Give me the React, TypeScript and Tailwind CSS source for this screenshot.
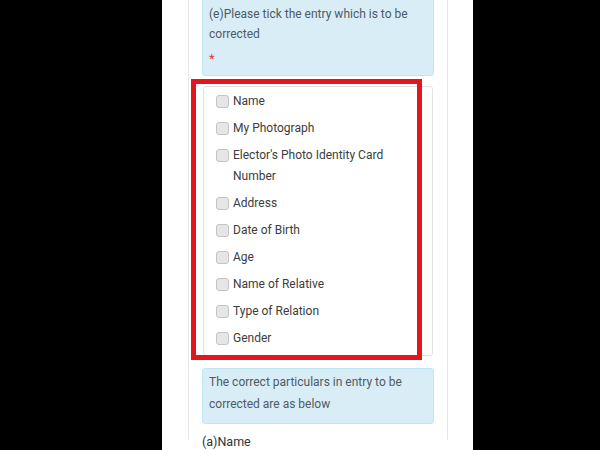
const entries = [
  "Name",
  "My Photograph",
  "Elector's Photo Identity Card Number",
  "Address",
  "Date of Birth",
  "Age",
  "Name of Relative",
  "Type of Relation",
  "Gender",
];

const Checkbox = () => (
  <span className="mt-[4px] h-[13px] w-[13px] shrink-0 rounded-[3px] border border-[#c4c4c4] bg-[#e6e6e6]" />
);

export default function App() {
  return (
    <div
      className="flex h-[450px] w-[600px] overflow-hidden bg-black"
      style={{ fontFamily: "Roboto, 'Noto Sans', sans-serif" }}
    >
      <div className="w-[162px] shrink-0" />
      <div className="relative w-[311px] shrink-0 bg-white pl-[26px]">
        <div className="h-full w-[260px] border-x border-[#e6e6e6] px-[13px]">
          <div className="-mt-[10px] rounded-[3px] border border-[#bce8f1] bg-[#d9edf7] pl-[6px] pr-2 pt-[13px] pb-[6px] text-[12px] leading-[20px] text-[#4d5b63]">
            <p>(e)Please tick the entry which is to be corrected</p>
            <p className="mt-[5px] text-[13px] text-[#e23b3b]">*</p>
          </div>

          <div className="mx-px mt-[10px] rounded-[3px] border border-[#e2e2e2] pl-[12px] pr-4 pt-[4px] pb-[6px]">
            <ul className="flex flex-col gap-[6px]">
              {entries.map((e) => (
                <li key={e} className="flex gap-[4px] text-[12px] leading-[21px] text-[#3c3c3c]">
                  <Checkbox />
                  <span>{e}</span>
                </li>
              ))}
            </ul>
          </div>

          <div className="mt-[12px] rounded-[3px] border border-[#bce8f1] bg-[#d9edf7] pl-[6px] pr-2 pt-[2px] pb-[8px] text-[12px] leading-[22px] text-[#4d5b63]">
            The correct particulars in entry to be corrected are as below
          </div>

          <p className="mt-[8px] text-[12.5px] leading-[20px] text-[#333]">(a)Name</p>
        </div>

        <div className="absolute left-[29px] top-[79px] h-[281px] w-[231px] border-[5px] border-[#e3161f]" />
      </div>
      <div className="flex-1" />
    </div>
  );
}
